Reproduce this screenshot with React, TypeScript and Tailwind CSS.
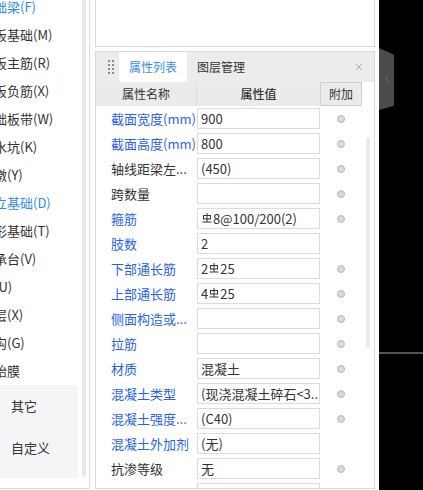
import { X, ChevronLeft } from 'lucide-react';

interface Row {
  label: string;
  value: string;
  blue: boolean;
  dot: boolean;
}

const sideItems = [
  { text: '基础梁(F)', blue: true },
  { text: '筏板基础(M)', blue: false },
  { text: '筏板主筋(R)', blue: false },
  { text: '筏板负筋(X)', blue: false },
  { text: '基础板带(W)', blue: false },
  { text: '集水坑(K)', blue: false },
  { text: '柱墩(Y)', blue: false },
  { text: '独立基础(D)', blue: true },
  { text: '条形基础(T)', blue: false },
  { text: '桩承台(V)', blue: false },
  { text: '桩(U)', blue: false },
  { text: '垫层(X)', blue: false },
  { text: '地沟(G)', blue: false },
  { text: '砖胎膜', blue: false },
];

const rows: Row[] = [
  { label: '截面宽度(mm)', value: '900', blue: true, dot: true },
  { label: '截面高度(mm)', value: '800', blue: true, dot: true },
  { label: '轴线距梁左...', value: '(450)', blue: false, dot: true },
  { label: '跨数量', value: '', blue: false, dot: true },
  { label: '箍筋', value: '#8@100/200(2)', blue: true, dot: true },
  { label: '肢数', value: '2', blue: true, dot: false },
  { label: '下部通长筋', value: '2#25', blue: true, dot: true },
  { label: '上部通长筋', value: '4#25', blue: true, dot: true },
  { label: '侧面构造或...', value: '', blue: true, dot: true },
  { label: '拉筋', value: '', blue: true, dot: true },
  { label: '材质', value: '混凝土', blue: true, dot: true },
  { label: '混凝土类型', value: '(现浇混凝土碎石<3...', blue: true, dot: true },
  { label: '混凝土强度...', value: '(C40)', blue: true, dot: true },
  { label: '混凝土外加剂', value: '(无)', blue: true, dot: false },
  { label: '抗渗等级', value: '无', blue: false, dot: true },
  { label: '泵送类型', value: '(混凝土泵)', blue: true, dot: false },
];

// rebar grade mark (HRB400)
function Rebar() {
  return (
    <svg width="10" height="10" viewBox="0 0 10 10" className="inline-block mx-[1px] -translate-y-[2px]">
      <path d="M5 0V9M0.5 9H9.5" stroke="#333" strokeWidth="1" fill="none" />
      <rect x="1.5" y="2.5" width="7" height="3.5" stroke="#333" strokeWidth="1" fill="none" />
    </svg>
  );
}

function Value({ v }: { v: string }) {
  const parts = v.split('#');
  return (
    <>
      {parts.map((p, i) => (
        <span key={i}>
          {i > 0 && <Rebar />}
          {p}
        </span>
      ))}
    </>
  );
}

export default function App() {
  return (
    <div
      className="w-[423px] h-[490px] bg-black flex overflow-hidden text-[#333]"
      style={{ fontFamily: '"Noto Sans CJK SC", "Noto Sans", sans-serif' }}
    >
      <div className="w-[379px] h-[490px] bg-white flex">
        {/* left tree */}
        <div className="w-[90px] h-[489px] border-r border-b border-[#d9d9d9] flex overflow-hidden">
          <div className="w-[78px] flex flex-col overflow-hidden">
            <div className="flex flex-col mt-[-7px]">
              {sideItems.map((it) => (
                <div
                  key={it.text}
                  className={`h-[28px] leading-[28px] text-[13px] whitespace-nowrap ml-[-19px] ${
                    it.blue ? 'text-[#2d8cf0]' : 'text-[#333]'
                  }`}
                >
                  {it.text}
                </div>
              ))}
            </div>
            <div className="h-[93px] bg-[#f4f5f7] flex flex-col">
              <div className="h-[42px] flex items-center pl-[11px] text-[13px]">其它</div>
              <div className="h-[42px] flex items-center pl-[11px] text-[13px]">自定义</div>
            </div>
          </div>
          <div className="w-[4px] h-[477px] ml-[4px] bg-[#e8e8e8] rounded-b-full" />
        </div>

        <div className="w-[5px]" />

        {/* main column */}
        <div className="w-[280px] flex flex-col">
          <div className="h-[47px] border-x border-b border-[#d9d9d9]" />
          <div className="h-[4px]" />
          <div className="h-[438px] border border-[#d9d9d9] flex flex-col overflow-hidden">
            {/* tabs */}
            <div className="h-[30px] bg-[#ececec] flex items-stretch shrink-0">
              <div className="w-[23px] flex items-center justify-center">
                <div className="grid grid-cols-2 gap-x-[2px] gap-y-[2px] ml-[6px]">
                  {Array.from({ length: 8 }).map((_, i) => (
                    <div key={i} className="w-[2px] h-[2px] bg-[#8a8a8a]" />
                  ))}
                </div>
              </div>
              <div className="w-[68px] bg-white flex items-center justify-center text-[12px] text-[#3b8ef0]">
                属性列表
              </div>
              <div className="flex items-center ml-[10px] text-[12px] text-[#333]">图层管理</div>
              <div className="ml-auto mr-[9px] flex items-center">
                <X size={12} strokeWidth={1.5} color="#999" />
              </div>
            </div>

            {/* column header */}
            <div className="h-[24px] flex shrink-0 text-[12px]">
              <div className="w-[101px] bg-[#ebebeb] border-r border-[#dcdcdc] flex items-center justify-center">
                属性名称
              </div>
              <div className="w-[123px] bg-[#ebebeb] flex items-center justify-center font-medium">
                属性值
              </div>
              <div className="w-[42px] bg-[#ebebeb] border border-[#cfcfcf] flex items-center justify-center">
                附加
              </div>
            </div>

            {/* body */}
            <div className="flex flex-1 overflow-hidden">
              <div className="w-[266px] flex flex-col">
                {rows.map((r) => (
                  <div key={r.label} className="h-[25px] flex items-center shrink-0">
                    <div
                      className={`w-[101px] pl-[15px] text-[13px] whitespace-nowrap overflow-hidden ${
                        r.blue ? 'text-[#2a5ff0]' : 'text-[#333]'
                      }`}
                    >
                      {r.label}
                    </div>
                    <div className="w-[123px] h-[21px] border border-[#dcdcdc] pl-[3px] text-[13px] leading-[19px] whitespace-nowrap overflow-hidden">
                      <Value v={r.value} />
                    </div>
                    <div className="w-[42px] flex items-center justify-center">
                      {r.dot && (
                        <div className="w-[8px] h-[8px] rounded-full bg-[#dadada] border border-[#b9b9b9]" />
                      )}
                    </div>
                  </div>
                ))}
              </div>
              <div className="w-[12px]">
                <div className="w-[4px] h-[211px] ml-[4px] mt-[31px] bg-[#ebebeb] rounded-full" />
              </div>
            </div>
          </div>
        </div>
      </div>

      {/* dark side */}
      <div className="w-[44px] flex flex-col">
        <div className="mt-[48px] w-[15px] h-[62px] bg-[#4b4b4b] [clip-path:polygon(0_0,100%_11%,100%_93%,0_100%)] flex items-center justify-center">
          <ChevronLeft size={10} strokeWidth={1.5} color="#8a8a8a" />
        </div>
        <div className="mt-[242px] h-[2px] bg-[#555]" />
      </div>
    </div>
  );
}
